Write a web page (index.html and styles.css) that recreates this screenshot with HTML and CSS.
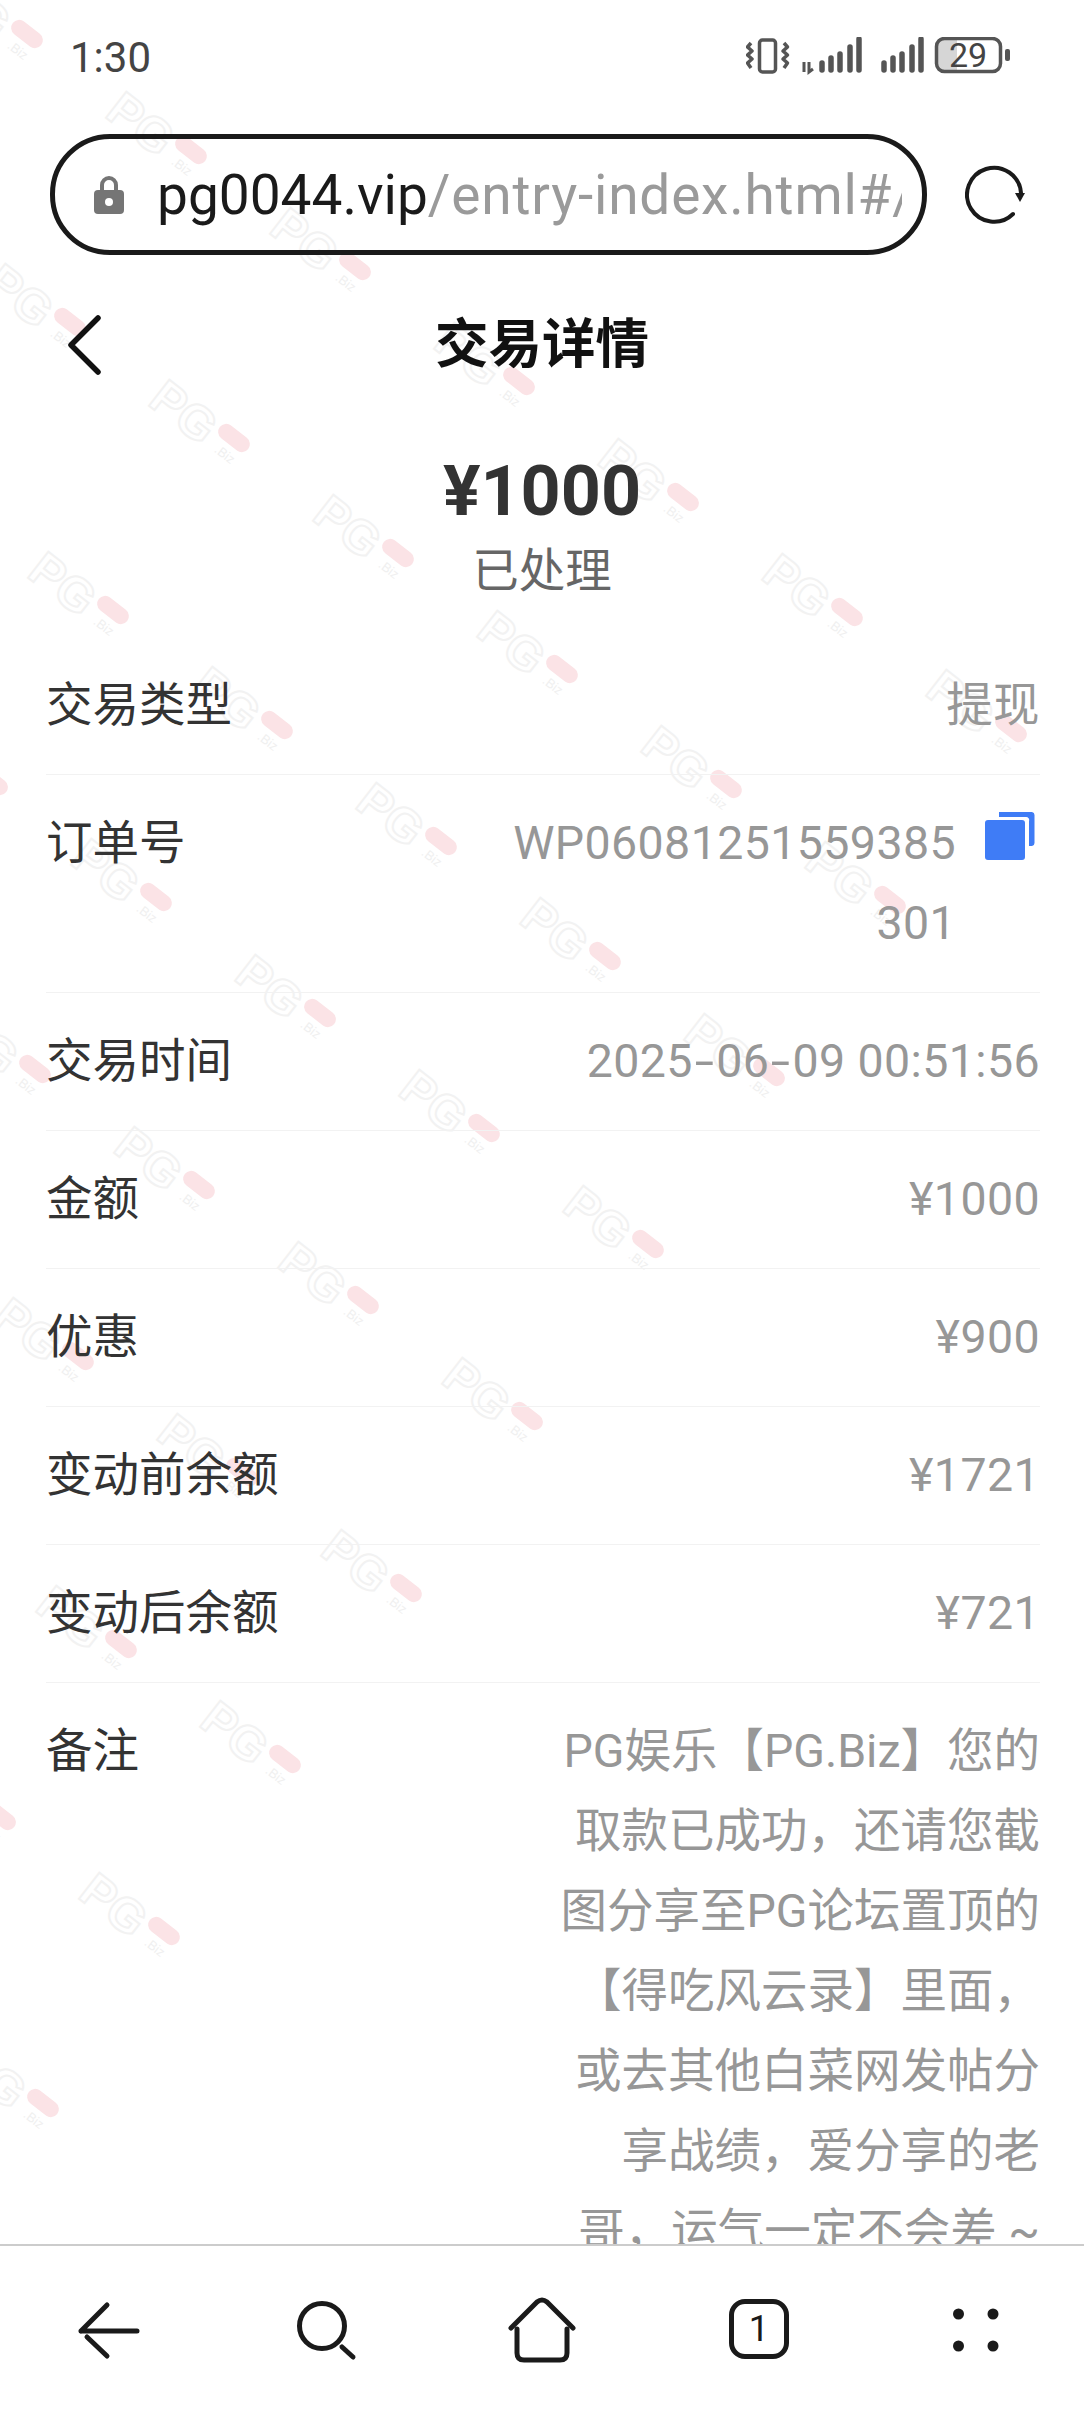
FILE: index.html
```html
<!DOCTYPE html>
<html lang="zh-CN">

<head>
    <meta charset="UTF-8">
    <meta name="viewport" content="width=device-width, initial-scale=1.0">
    <title>交易详情</title>
    <link rel="stylesheet" href="styles.css">
</head>

<body>
    <!-- repeating brand mark behind the page -->
    <svg class="watermark" width="1084" height="2244" aria-hidden="true">
        <defs>
            <g id="mark" transform="rotate(38)">
                <rect class="mark-pill" x="-18" y="-8" width="36" height="16" rx="8"></rect>
                <text class="mark-logo" x="-90" y="27">PG</text>
                <text class="mark-small" x="-8" y="23">.Biz</text>
            </g>
        </defs>
        <use href="#mark" transform="translate(27 34)"></use>
        <use href="#mark" transform="translate(191 150)"></use>
        <use href="#mark" transform="translate(355 266)"></use>
        <use href="#mark" transform="translate(519 381)"></use>
        <use href="#mark" transform="translate(683 497)"></use>
        <use href="#mark" transform="translate(847 612)"></use>
        <use href="#mark" transform="translate(1011 728)"></use>
        <use href="#mark" transform="translate(70 322)"></use>
        <use href="#mark" transform="translate(234 438)"></use>
        <use href="#mark" transform="translate(398 553)"></use>
        <use href="#mark" transform="translate(562 669)"></use>
        <use href="#mark" transform="translate(726 784)"></use>
        <use href="#mark" transform="translate(890 900)"></use>
        <use href="#mark" transform="translate(113 610)"></use>
        <use href="#mark" transform="translate(277 725)"></use>
        <use href="#mark" transform="translate(441 841)"></use>
        <use href="#mark" transform="translate(605 956)"></use>
        <use href="#mark" transform="translate(769 1072)"></use>
        <use href="#mark" transform="translate(-8 781)"></use>
        <use href="#mark" transform="translate(156 897)"></use>
        <use href="#mark" transform="translate(320 1013)"></use>
        <use href="#mark" transform="translate(484 1128)"></use>
        <use href="#mark" transform="translate(648 1244)"></use>
        <use href="#mark" transform="translate(35 1069)"></use>
        <use href="#mark" transform="translate(199 1185)"></use>
        <use href="#mark" transform="translate(363 1300)"></use>
        <use href="#mark" transform="translate(527 1416)"></use>
        <use href="#mark" transform="translate(78 1356)"></use>
        <use href="#mark" transform="translate(242 1472)"></use>
        <use href="#mark" transform="translate(406 1588)"></use>
        <use href="#mark" transform="translate(121 1644)"></use>
        <use href="#mark" transform="translate(285 1759)"></use>
        <use href="#mark" transform="translate(0 1816)"></use>
        <use href="#mark" transform="translate(164 1931)"></use>
        <use href="#mark" transform="translate(43 2103)"></use>
    </svg>

    <div class="status-bar">
        <span class="clock">1:30</span>
        <svg class="status-icons" width="270" height="40" viewBox="0 0 270 40">
            <!-- vibrate -->
            <rect class="st-line" x="13.500" y="3" width="16" height="32" rx="3"></rect>
            <path class="st-line" d="M5 6 L1.500 10 L6 14 L1.500 18 L6 22 L1.500 26 L5 31"></path>
            <path class="st-line" d="M38 6 L41.500 10 L37 14 L41.500 18 L37 22 L41.500 26 L38 31"></path>
            <!-- first sim -->
            <path class="st-thin" d="M58 25 V35 M63 25 V35 L67 32"></path>
            <path class="st-bar" d="M76 26 V33 M85 21 V33 M94 17 V33 M104 10 V33 M113 2 V33"></path>
            <!-- second sim -->
            <path class="st-bar" d="M138 26 V33 M147 21 V33 M156 17 V33 M166 10 V33 M175 2 V33"></path>
            <!-- battery -->
            <path class="battery-level" d="M198 2 H211 V34 H198 A7 7 0 0 1 191 27 V9 A7 7 0 0 1 198 2Z"></path>
            <rect class="st-line" x="190.500" y="1.500" width="64" height="33" rx="8"></rect>
            <rect class="battery-tip" x="259" y="12" width="5" height="12" rx="2"></rect>
            <text class="battery-text" x="222" y="30">29</text>
        </svg>
    </div>

    <div class="url-row">
        <div class="url-bar">
            <svg class="lock" width="32" height="40" viewBox="0 0 32 40">
                <path d="M9 17 V10 A7 7 0 0 1 23 10 V17" fill="none" stroke="#757575" stroke-width="4"></path>
                <rect x="1" y="15" width="30" height="24" rx="4" fill="#757575"></rect>
                <circle cx="16" cy="27" r="4" fill="#fff"></circle>
            </svg>
            <div class="url-text"><span class="url-host">pg0044.vip</span>/entry-index.html#/</div>
        </div>
        <svg class="reload" width="60" height="60" viewBox="0 0 60 60">
            <path d="M48 49 A27 27 0 1 1 56 28" fill="none" stroke="#1a1a1a" stroke-width="4" stroke-linecap="round"></path>
            <path d="M50 28 H60 L55 37Z" fill="#1a1a1a"></path>
        </svg>
    </div>

    <div class="page-header">
        <svg class="back" width="36" height="60" viewBox="0 0 36 60">
            <path d="M32 3 L5 30 L32 57" fill="none" stroke="#111" stroke-width="5.500" stroke-linecap="round" stroke-linejoin="round"></path>
        </svg>
        <h1>交易详情</h1>
    </div>

    <div class="summary">
        <div class="amount">¥1000</div>
        <div class="state">已处理</div>
    </div>

    <div class="rows">
        <div class="row">
            <div class="label">交易类型</div>
            <div class="value">提现</div>
        </div>
        <div class="row">
            <div class="label">订单号</div>
            <div class="order">
                <div class="value order-no">WP06081251559385301</div>
                <svg class="copy" width="50" height="48" viewBox="0 0 50 48">
                    <path d="M14 0 H47 A3 3 0 0 1 49.500 3 V31 A3 3 0 0 1 47 34 H44 V9 A3 3 0 0 0 41 5 H14Z" fill="#3f7cf6"></path>
                    <rect x="0" y="8" width="40" height="40" rx="3" fill="#3f7cf6"></rect>
                </svg>
            </div>
        </div>
        <div class="row">
            <div class="label">交易时间</div>
            <div class="value">2025<span class="dash">-</span>06<span class="dash">-</span>09 00:51:56</div>
        </div>
        <div class="row">
            <div class="label">金额</div>
            <div class="value">¥1000</div>
        </div>
        <div class="row">
            <div class="label">优惠</div>
            <div class="value">¥900</div>
        </div>
        <div class="row">
            <div class="label">变动前余额</div>
            <div class="value">¥1721</div>
        </div>
        <div class="row">
            <div class="label">变动后余额</div>
            <div class="value">¥721</div>
        </div>
        <div class="row">
            <div class="label">备注</div>
            <div class="value note">PG娱乐【PG.Biz】您的取款已成功，还请您截图分享至PG论坛置顶的【得吃风云录】里面，或去其他白菜网发帖分享战绩，爱分享的老哥，运气一定不会差 ~</div>
        </div>
    </div>

    <div class="browser-nav">
        <svg class="nav-icon" width="70" height="70" viewBox="0 0 70 70">
            <path d="M8 35 H64 M8 35 L34 9 M14 41 L34 60"></path>
        </svg>
        <svg class="nav-icon" width="70" height="70" viewBox="0 0 70 70">
            <circle cx="32" cy="30" r="22.500"></circle>
            <path d="M52 51 L63 61"></path>
        </svg>
        <svg class="nav-icon" width="70" height="70" viewBox="0 0 70 70">
            <path d="M4 32 L30 6 Q35 2 40 6 L66 32"></path>
            <path d="M10 33 V57 Q10 64 17 64 H53 Q60 64 60 57 V33"></path>
        </svg>
        <div class="tab-count">1</div>
        <svg class="nav-dots" width="70" height="70" viewBox="0 0 70 70">
            <circle cx="17.500" cy="18" r="5.500"></circle>
            <circle cx="52" cy="18" r="5.500"></circle>
            <circle cx="17.500" cy="50" r="5.500"></circle>
            <circle cx="52" cy="50" r="5.500"></circle>
        </svg>
    </div>
</body>

</html>
```

FILE: styles.css
```css
:root {
    --text-color: #333333;
    --muted-color: #979797;
    --line-color: #f2f2f2;
    --icon-color: #1a1a1a;
}

html {
    background-color: #ffffff;
}

body {
    font-family: Roboto, "Noto Sans CJK SC", sans-serif;
    color: var(--text-color);
    width: 1084px;
    height: 2412px;
    margin: 0;
    display: flex;
    flex-direction: column;
    overflow: hidden;
}

.watermark {
    position: absolute;
    top: 0;
    left: 0;
    z-index: -1;
}

.mark-pill {
    fill: #fbe3e6;
}

.mark-logo {
    font-family: "Liberation Sans", sans-serif;
    font-size: 48px;
    font-weight: 700;
    fill: none;
    stroke: #f2f2f2;
    stroke-width: 2;
}

.mark-small {
    font-family: "Liberation Sans", sans-serif;
    font-size: 13px;
    fill: #f0f0f0;
}

.status-bar {
    height: 114px;
    padding: 0 72px 0 70px;
    display: flex;
    justify-content: space-between;
    align-items: center;
    box-sizing: border-box;
}

.clock {
    font-size: 42px;
    color: #444444;
}

.status-icons {
    margin-right: -4px;
    display: block;
}

.st-line {
    fill: none;
    stroke: #555555;
    stroke-width: 3.5;
    stroke-linejoin: round;
}

.st-thin {
    fill: none;
    stroke: #555555;
    stroke-width: 3;
}

.st-bar {
    fill: none;
    stroke: #555555;
    stroke-width: 5.5;
    stroke-linecap: round;
}

.battery-level {
    fill: #d6d6d6;
}

.battery-tip {
    fill: #555555;
}

.battery-text {
    font-size: 34px;
    fill: #444444;
    text-anchor: middle;
}

.url-row {
    padding: 20px 0 0 50px;
    display: flex;
    align-items: center;
    gap: 38px;
}

.url-bar {
    width: 877px;
    height: 121px;
    padding: 0 20px 0 38px;
    border: 5px solid var(--icon-color);
    border-radius: 60px;
    display: flex;
    align-items: center;
    gap: 32px;
    box-sizing: border-box;
}

.lock {
    flex-shrink: 0;
}

.url-text {
    flex: 1;
    font-size: 55px;
    letter-spacing: 0.8px;
    color: #9a9a9a;
    white-space: nowrap;
    overflow: hidden;
}

.url-host {
    letter-spacing: 0;
    color: var(--icon-color);
}

.reload {
    flex-shrink: 0;
}

.page-header {
    height: 168px;
    position: relative;
    display: flex;
    justify-content: center;
    align-items: center;
}

.page-header h1 {
    margin: 0;
    font-size: 53.5px;
    font-weight: 700;
    color: #111111;
}

.back {
    position: absolute;
    left: 66px;
    top: 60px;
}

.summary {
    padding-top: 23px;
    text-align: center;
}

.amount {
    font-size: 70px;
    font-weight: 700;
    line-height: 90px;
}

.state {
    font-size: 46.5px;
    line-height: 70px;
    color: #666666;
}

.rows {
    flex: 1;
    margin-top: 31px;
    padding: 0 44px 0 46px;
    overflow: hidden;
}

.row {
    padding: 28px 0 29px;
    border-bottom: 1px solid var(--line-color);
    display: flex;
    justify-content: space-between;
    font-size: 46.5px;
    line-height: 80px;
}

.row:last-child {
    border-bottom: none;
}

.label {
    flex-shrink: 0;
    color: var(--text-color);
}

.value {
    color: var(--muted-color);
    text-align: right;
    letter-spacing: 0.4px;
}

.dash {
    display: inline-block;
    margin: 0 5px;
    transform: scaleX(1.5);
}

.order {
    display: flex;
    align-items: flex-start;
    gap: 29px;
}

.order-no {
    width: 455px;
    word-break: break-all;
}

.copy {
    margin-top: 9px;
    margin-right: 5px;
}

.note {
    width: 492px;
    letter-spacing: 0;
}

.browser-nav {
    height: 168px;
    border-top: 2px solid #cccccc;
    background-color: #ffffff;
    display: grid;
    grid-template-columns: repeat(5, 1fr);
    justify-items: center;
    align-items: start;
    padding-top: 50px;
    box-sizing: border-box;
}

.nav-icon {
    fill: none;
    stroke: var(--icon-color);
    stroke-width: 5;
    stroke-linecap: round;
    stroke-linejoin: round;
}

.nav-dots {
    fill: var(--icon-color);
}

.tab-count {
    width: 60px;
    height: 60px;
    margin-top: 3px;
    border: 5px solid var(--icon-color);
    border-radius: 16px;
    display: flex;
    justify-content: center;
    align-items: center;
    box-sizing: border-box;
    font-size: 36px;
    color: var(--icon-color);
}
```
